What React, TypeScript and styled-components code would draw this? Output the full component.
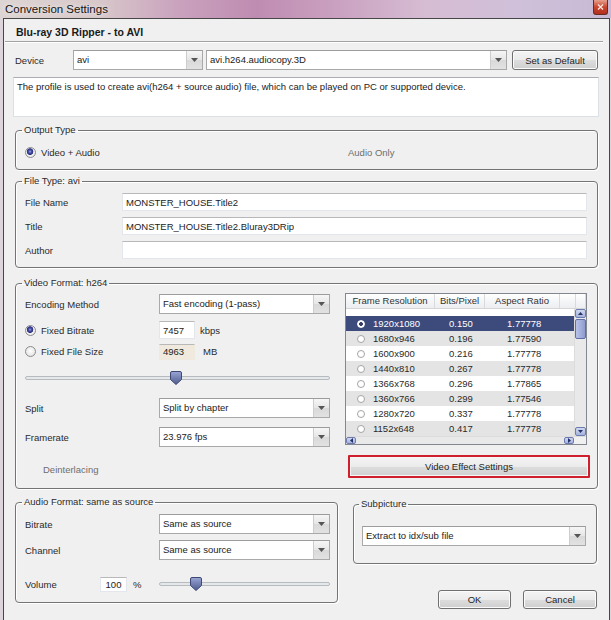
import React from 'react';
import styled, { createGlobalStyle } from 'styled-components';

const FONT = `"Liberation Sans", Arial, Helvetica, sans-serif`;

const GlobalStyle = createGlobalStyle`
  *, *::before, *::after { box-sizing: border-box; }
  html, body { margin: 0; padding: 0; }
  body {
    width: 611px;
    height: 620px;
    overflow: hidden;
    background: #ddd4dc;
    font-family: ${FONT};
    font-size: 9.5px;
    color: #222;
  }
`;

const Window = styled.div`
  width: 611px;
  height: 620px;
  display: flex;
  flex-direction: column;
`;

const TitleBar = styled.div`
  flex: 0 0 18px;
  display: flex;
  align-items: flex-start;
  justify-content: space-between;
  padding: 0 3px 0 5px;
  background: linear-gradient(
    90deg,
    #ddd5d3 0%,
    #d8c8ca 16%,
    #c9a0bd 30%,
    #bf8cb1 42%,
    #c99fbf 54%,
    #d6bdd4 70%,
    #cfc0d9 86%,
    #c7b9d5 100%
  );
`;

const TitleText = styled.span`
  font-size: 11.5px;
  line-height: 18px;
  color: #141414;
  text-shadow: 0 0 5px rgba(255, 255, 255, 0.9);
`;

const CloseButton = styled.div`
  width: 15px;
  height: 15px;
  border: 1px solid #6b2b22;
  border-top: none;
  border-radius: 0 0 3px 3px;
  background: linear-gradient(#e7a08e, #c9462f 50%, #b1301d);
  display: flex;
  align-items: center;
  justify-content: center;
`;

const Frame = styled.div`
  flex: 1;
  display: flex;
  padding: 0 2px 0 3px;
`;

const Client = styled.div`
  flex: 1;
  display: flex;
  flex-direction: column;
  background: #f0f0f0;
  border: 1px solid #474747;
  border-bottom: none;
`;

const Header = styled.div`
  height: 22px;
  padding: 4px 0 0 12px;
  display: flex;
  align-items: center;
  font-size: 10.5px;
  font-weight: bold;
  color: #1a1a1a;
`;

const Separator = styled.div`
  height: 2px;
  margin: 0 6px 0 1px;
  border-top: 1px solid #a2a2a2;
  border-bottom: 1px solid #ffffff;
`;

const Body = styled.div`
  padding: 0 11px;
  display: flex;
  flex-direction: column;
`;

const DeviceRow = styled.div`
  margin-top: 7px;
  height: 20px;
  display: flex;
  align-items: center;
`;

const Label = styled.span<{ $w?: number; $muted?: boolean; $indent?: number }>`
  flex: 0 0 auto;
  ${(p) => (p.$w ? `width: ${p.$w}px;` : '')}
  padding-left: ${(p) => p.$indent ?? 0}px;
  color: ${(p) => (p.$muted ? '#6e6e6e' : '#2a2a2a')};
  white-space: nowrap;
`;

const ComboBox = styled.div<{ $w: number; $ml?: number }>`
  flex: 0 0 auto;
  width: ${(p) => p.$w}px;
  height: 20px;
  margin-left: ${(p) => p.$ml ?? 0}px;
  display: flex;
  background: #ffffff;
  border: 1px solid #a9a9a9;
  border-top-color: #9c9c9c;
`;

const ComboText = styled.span`
  flex: 1;
  padding-left: 3px;
  line-height: 18px;
  white-space: nowrap;
  overflow: hidden;
  color: #222;
`;

const ComboArrow = styled.span`
  flex: 0 0 16px;
  border-left: 1px solid #cdcdcd;
  background: linear-gradient(#f6f6f6, #e6e6e6 50%, #d9d9d9 51%, #e2e2e2);
  display: flex;
  align-items: center;
  justify-content: center;
`;

const PushButton = styled.button<{ $w: number; $ml?: number; $h?: number }>`
  flex: 0 0 auto;
  width: ${(p) => p.$w}px;
  height: ${(p) => p.$h ?? 20}px;
  margin: 0 0 0 ${(p) => p.$ml ?? 0}px;
  padding: 0;
  font-family: ${FONT};
  font-size: 9.5px;
  color: #1e1e1e;
  border: 1px solid #707070;
  border-radius: 3px;
  background: linear-gradient(#f4f4f4, #ebebeb 50%, #dddddd 51%, #cfcfcf);
  box-shadow: inset 0 0 0 1px #fbfbfb;
`;

const HighlightButton = styled(PushButton)`
  border: 2px solid #cf1f2d;
  border-radius: 1px;
  box-shadow: inset 0 0 0 1px #f7f7f7;
`;

const Description = styled.div`
  margin: 7px -1px 0 -2px;
  height: 40px;
  padding: 3px 3px 0;
  line-height: 12px;
  background: #ffffff;
  border: 1px solid #dbdfe6;
  border-top-color: #abadb3;
  color: #222;
`;

const Group = styled.fieldset<{ $mt: number; $w?: number; $pl?: number; $pr?: number }>`
  margin: ${(p) => p.$mt}px 0 0;
  ${(p) => (p.$w ? `width: ${p.$w}px; flex: 0 0 auto;` : '')}
  padding: 0 ${(p) => p.$pr ?? 10}px 0 ${(p) => p.$pl ?? 9}px;
  min-width: 0;
  border: 1px solid #747474;
  border-radius: 4px;
  box-shadow: inset 1px 1px 0 #ffffff, 1px 1px 0 #ffffff;
`;

const Legend = styled.legend`
  margin-left: -3px;
  padding: 0 2px;
  line-height: 12px;
  color: #2a2a2a;
`;

const OutputRow = styled.div`
  margin: 8px 0 9px;
  height: 16px;
  display: grid;
  grid-template-columns: 323px auto;
  align-items: center;
`;

const RadioLabel = styled.span`
  display: flex;
  align-items: center;
  gap: 5px;
  color: #2a2a2a;
  white-space: nowrap;
`;

const Radio = styled.span<{ $checked?: boolean }>`
  flex: 0 0 11px;
  width: 11px;
  height: 11px;
  border-radius: 50%;
  border: 1px solid #8b8b8b;
  background: ${(p) =>
    p.$checked
      ? 'radial-gradient(circle at 45% 40%, #9aa6e6 0, #4650a8 1.5px, #2c2f7e 3px, #f2f2f2 3.6px, #e2e2e2 100%)'
      : 'radial-gradient(circle at 50% 45%, #ffffff 0, #f4f4f4 2px, #dedede 100%)'};
`;

const FieldGrid = styled.div`
  margin: 6px 0 8px;
  display: grid;
  grid-template-columns: 97px 1fr;
  grid-auto-rows: 18px;
  row-gap: 6px;
  align-items: center;
`;

const TextField = styled.input<{ $w?: number; $beige?: boolean; $h?: number; $center?: boolean }>`
  ${(p) => (p.$w ? `width: ${p.$w}px;` : 'width: 100%;')}
  height: ${(p) => p.$h ?? 18}px;
  margin: 0;
  padding: 0 3px;
  font-family: ${FONT};
  font-size: 9.5px;
  color: #222;
  text-align: ${(p) => (p.$center ? 'center' : 'left')};
  background: ${(p) => (p.$beige ? '#efeadd' : '#ffffff')};
  border: 1px solid ${(p) => (p.$beige ? '#efeadd' : '#e3e6ea')};
  border-top-color: #b8b8b8;
  outline: none;
`;

const VideoColumns = styled.div`
  display: grid;
  grid-template-columns: 305px 245px;
  column-gap: 15px;
`;

const LeftCol = styled.div`
  display: flex;
  flex-direction: column;
`;

const FormRow = styled.div<{ $mt: number; $h: number; $cols?: string }>`
  margin-top: ${(p) => p.$mt}px;
  height: ${(p) => p.$h}px;
  display: grid;
  grid-template-columns: ${(p) => p.$cols ?? '134px 1fr'};
  align-items: center;
`;

const ValueGroup = styled.span<{ $gap: number }>`
  display: flex;
  align-items: center;
  gap: ${(p) => p.$gap}px;
`;

const Slider = styled.div<{ $w: number }>`
  position: relative;
  width: ${(p) => p.$w}px;
  height: 14px;
  display: flex;
  align-items: center;
  &::before {
    content: '';
    display: block;
    width: 100%;
    height: 4px;
    border: 1px solid #b7bbc0;
    border-radius: 2px;
    background: #e5e8eb;
  }
`;

const ThumbSvg = styled.svg<{ $left: number }>`
  position: absolute;
  top: 0;
  left: ${(p) => p.$left}px;
`;

const RightCol = styled.div`
  margin-top: 4px;
  display: flex;
  flex-direction: column;
`;

const ListView = styled.div`
  width: 242px;
  height: 152px;
  border: 1px solid #828790;
  background: #ffffff;
  display: flex;
  flex-direction: column;
`;

const ListHeader = styled.div`
  flex: 0 0 15px;
  display: flex;
  background: linear-gradient(#ffffff, #f3f4f6 60%, #eceef1);
  border-bottom: 1px solid #d5d5d5;
`;

const HeaderCell = styled.span<{ $w: number }>`
  flex: 0 0 ${(p) => p.$w}px;
  line-height: 14px;
  text-align: center;
  color: #333;
  border-right: 1px solid #d9dadc;
  white-space: nowrap;
  overflow: hidden;
`;

const ListBody = styled.div`
  flex: 1;
  display: flex;
  min-height: 0;
`;

const RowsArea = styled.div`
  flex: 1;
  padding-top: 7px;
  overflow: hidden;
`;

const Row = styled.div<{ $selected?: boolean; $alt?: boolean }>`
  height: 15px;
  display: grid;
  grid-template-columns: 27px 76px 58px 1fr;
  align-items: center;
  background: ${(p) => (p.$selected ? '#3c4a7c' : p.$alt ? '#e4e4e4' : '#ffffff')};
  color: ${(p) => (p.$selected ? '#ffffff' : '#2a2a2a')};
  white-space: nowrap;
`;

const RowRadio = styled.span<{ $checked?: boolean }>`
  margin-left: 11px;
  width: 8px;
  height: 8px;
  border-radius: 50%;
  border: 1px solid ${(p) => (p.$checked ? '#ffffff' : '#a4a4a4')};
  background: ${(p) =>
    p.$checked ? 'radial-gradient(circle, #3a3f6a 0, #3a3f6a 1.6px, #ffffff 2.2px)' : '#ffffff'};
`;

const VScroll = styled.div`
  flex: 0 0 12px;
  display: flex;
  flex-direction: column;
  background: #e9e9ea;
  border-left: 1px solid #dcdcdc;
`;

const ScrollArrow = styled.span<{ $w?: number; $h?: number }>`
  flex: 0 0 auto;
  width: ${(p) => (p.$w ? `${p.$w}px` : '100%')};
  height: ${(p) => (p.$h ? `${p.$h}px` : '100%')};
  border: 1px solid #6d7cb0;
  border-radius: 2px;
  background: linear-gradient(#cfd7f0, #a6b2dc);
  display: flex;
  align-items: center;
  justify-content: center;
`;

const ScrollThumb = styled.span`
  margin-top: 1px;
  height: 20px;
  border: 1px solid #5f6ea4;
  border-radius: 2px;
  background: linear-gradient(90deg, #b9c3e6, #8e9bd0);
`;

const ScrollTrack = styled.span`
  flex: 1;
`;

const HScroll = styled.div`
  flex: 0 0 8px;
  display: flex;
  background: #e9e9ea;
  border-top: 1px solid #dcdcdc;
`;

const Corner = styled.span`
  flex: 0 0 12px;
  background: #f0f0f0;
`;

const EffectRow = styled.div`
  margin: 10px 0 10px 3px;
`;

const BottomRow = styled.div`
  margin-top: 7px;
  display: flex;
  align-items: flex-start;
`;

const AudioRows = styled.div`
  display: flex;
  flex-direction: column;
  padding-bottom: 10px;
`;

const RightBottom = styled.div`
  margin-left: 15px;
  display: flex;
  flex-direction: column;
`;

const SubGroupBody = styled.div`
  margin: 16px 0 17px;
`;

const DialogButtons = styled.div`
  margin-top: 26px;
  display: flex;
  justify-content: flex-end;
  gap: 12px;
`;

const DownTriangle = () => (
  <svg width="7" height="4" viewBox="0 0 7 4">
    <path d="M0 0 H7 L3.5 4 Z" fill="#555" />
  </svg>
);

const Combo = ({ w, text, ml }: { w: number; text: string; ml?: number }) => (
  <ComboBox $w={w} $ml={ml}>
    <ComboText>{text}</ComboText>
    <ComboArrow>
      <DownTriangle />
    </ComboArrow>
  </ComboBox>
);

const SliderControl = ({ w, thumb }: { w: number; thumb: number }) => (
  <Slider $w={w}>
    <ThumbSvg $left={thumb} width="12" height="14" viewBox="0 0 12 14">
      <defs>
        <linearGradient id={`tg${thumb}`} x1="0" y1="0" x2="0" y2="1">
          <stop offset="0" stopColor="#9aa6d4" />
          <stop offset="1" stopColor="#4d5a8e" />
        </linearGradient>
      </defs>
      <path
        d="M0.5 2 Q0.5 0.5 2 0.5 H10 Q11.5 0.5 11.5 2 V8.5 L6 13.5 L0.5 8.5 Z"
        fill={`url(#tg${thumb})`}
        stroke="#3e4875"
      />
    </ThumbSvg>
  </Slider>
);

const Arrow = ({ dir }: { dir: 'up' | 'down' | 'left' | 'right' }) => {
  const d = {
    up: 'M0 3 L2.5 0 L5 3 Z',
    down: 'M0 0 H5 L2.5 3 Z',
    left: 'M3 0 V5 L0 2.5 Z',
    right: 'M0 0 V5 L3 2.5 Z',
  }[dir];
  const horizontal = dir === 'left' || dir === 'right';
  return (
    <svg width={horizontal ? 3 : 5} height={horizontal ? 5 : 3} viewBox={horizontal ? '0 0 3 5' : '0 0 5 3'}>
      <path d={d} fill="#24306a" />
    </svg>
  );
};

const resolutions: [string, string, string][] = [
  ['1920x1080', '0.150', '1.77778'],
  ['1680x946', '0.196', '1.77590'],
  ['1600x900', '0.216', '1.77778'],
  ['1440x810', '0.267', '1.77778'],
  ['1366x768', '0.296', '1.77865'],
  ['1360x766', '0.299', '1.77546'],
  ['1280x720', '0.337', '1.77778'],
  ['1152x648', '0.417', '1.77778'],
];

export default function App() {
  return (
    <>
      <GlobalStyle />
      <Window>
        <TitleBar>
          <TitleText>Conversion Settings</TitleText>
          <CloseButton>
            <svg width="7" height="6" viewBox="0 0 7 6">
              <path d="M1 0.5 L6 5.5 M6 0.5 L1 5.5" stroke="#f6e6e2" strokeWidth="1.4" />
            </svg>
          </CloseButton>
        </TitleBar>
        <Frame>
          <Client>
            <Header>Blu-ray 3D Ripper - to AVI</Header>
            <Separator />
            <Body>
              <DeviceRow>
                <Label $w={58}>Device</Label>
                <Combo w={130} text="avi" />
                <Combo w={301} ml={3} text="avi.h264.audiocopy.3D" />
                <PushButton $w={86} $ml={5}>Set as Default</PushButton>
              </DeviceRow>
              <Description>
                The profile is used to create avi(h264 + source audio) file, which can be played on PC or supported device.
              </Description>

              <Group $mt={7}>
                <Legend>Output Type</Legend>
                <OutputRow>
                  <RadioLabel>
                    <Radio $checked />
                    Video + Audio
                  </RadioLabel>
                  <Label $muted>Audio Only</Label>
                </OutputRow>
              </Group>

              <Group $mt={5}>
                <Legend>File Type: avi</Legend>
                <FieldGrid>
                  <Label>File Name</Label>
                  <TextField readOnly defaultValue="MONSTER_HOUSE.Title2" />
                  <Label>Title</Label>
                  <TextField readOnly defaultValue="MONSTER_HOUSE.Title2.Bluray3DRip" />
                  <Label>Author</Label>
                  <TextField readOnly defaultValue="" />
                </FieldGrid>
              </Group>

              <Group $mt={9} $pr={6}>
                <Legend>Video Format: h264</Legend>
                <VideoColumns>
                  <LeftCol>
                    <FormRow $mt={5} $h={20}>
                      <Label>Encoding Method</Label>
                      <Combo w={171} text="Fast encoding (1-pass)" />
                    </FormRow>
                    <FormRow $mt={7} $h={18}>
                      <RadioLabel>
                        <Radio $checked />
                        Fixed Bitrate
                      </RadioLabel>
                      <ValueGroup $gap={5}>
                        <TextField $w={36} readOnly defaultValue="7457" />
                        <Label>kbps</Label>
                      </ValueGroup>
                    </FormRow>
                    <FormRow $mt={4} $h={17}>
                      <RadioLabel>
                        <Radio />
                        Fixed File Size
                      </RadioLabel>
                      <ValueGroup $gap={8}>
                        <TextField $w={36} $h={16} $beige readOnly defaultValue="4963" />
                        <Label>MB</Label>
                      </ValueGroup>
                    </FormRow>
                    <FormRow $mt={11} $h={14} $cols="1fr">
                      <SliderControl w={305} thumb={145} />
                    </FormRow>
                    <FormRow $mt={13} $h={20}>
                      <Label>Split</Label>
                      <Combo w={171} text="Split by chapter" />
                    </FormRow>
                    <FormRow $mt={9} $h={20}>
                      <Label>Framerate</Label>
                      <Combo w={171} text="23.976 fps" />
                    </FormRow>
                    <FormRow $mt={14} $h={16} $cols="1fr">
                      <Label $muted $indent={18}>Deinterlacing</Label>
                    </FormRow>
                  </LeftCol>

                  <RightCol>
                    <ListView>
                      <ListHeader>
                        <HeaderCell $w={89}>Frame Resolution</HeaderCell>
                        <HeaderCell $w={50}>Bits/Pixel</HeaderCell>
                        <HeaderCell $w={75}>Aspect Ratio</HeaderCell>
                        <HeaderCell $w={16} />
                        <HeaderCell $w={10} />
                      </ListHeader>
                      <ListBody>
                        <RowsArea>
                          {resolutions.map(([res, bits, ratio], i) => (
                            <Row key={res} $selected={i === 0} $alt={i % 2 === 1}>
                              <RowRadio $checked={i === 0} />
                              <span>{res}</span>
                              <span>{bits}</span>
                              <span>{ratio}</span>
                            </Row>
                          ))}
                        </RowsArea>
                        <VScroll>
                          <ScrollArrow $h={9}>
                            <Arrow dir="up" />
                          </ScrollArrow>
                          <ScrollThumb />
                          <ScrollTrack />
                          <ScrollArrow $h={9}>
                            <Arrow dir="down" />
                          </ScrollArrow>
                        </VScroll>
                      </ListBody>
                      <HScroll>
                        <ScrollArrow $w={10}>
                          <Arrow dir="left" />
                        </ScrollArrow>
                        <ScrollTrack />
                        <ScrollArrow $w={10}>
                          <Arrow dir="right" />
                        </ScrollArrow>
                        <Corner />
                      </HScroll>
                    </ListView>
                    <EffectRow>
                      <HighlightButton $w={242} $h={23}>Video Effect Settings</HighlightButton>
                    </EffectRow>
                  </RightCol>
                </VideoColumns>
              </Group>

              <BottomRow>
                <Group $mt={0} $w={323} $pr={7}>
                  <Legend>Audio Format: same as source</Legend>
                  <AudioRows>
                    <FormRow $mt={6} $h={20}>
                      <Label>Bitrate</Label>
                      <Combo w={171} text="Same as source" />
                    </FormRow>
                    <FormRow $mt={6} $h={20}>
                      <Label>Channel</Label>
                      <Combo w={171} text="Same as source" />
                    </FormRow>
                    <FormRow $mt={16} $h={16} $cols="75px 59px 1fr">
                      <Label>Volume</Label>
                      <ValueGroup $gap={6}>
                        <TextField $w={27} $h={15} $center readOnly defaultValue="100" />
                        <Label>%</Label>
                      </ValueGroup>
                      <SliderControl w={171} thumb={31} />
                    </FormRow>
                  </AudioRows>
                </Group>

                <RightBottom>
                  <Group $mt={2} $w={244} $pl={8} $pr={10}>
                    <Legend>Subpicture</Legend>
                    <SubGroupBody>
                      <Combo w={224} text="Extract to idx/sub file" />
                    </SubGroupBody>
                  </Group>
                  <DialogButtons>
                    <PushButton $w={73} $h={19}>OK</PushButton>
                    <PushButton $w={74} $h={19}>Cancel</PushButton>
                  </DialogButtons>
                </RightBottom>
              </BottomRow>
            </Body>
          </Client>
        </Frame>
      </Window>
    </>
  );
}
